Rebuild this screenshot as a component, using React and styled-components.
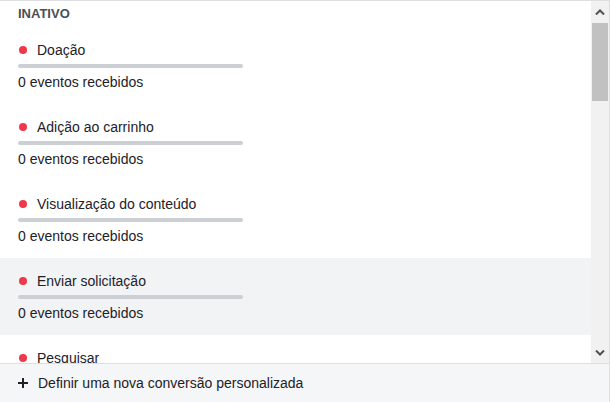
import React from "react";
import styled, { createGlobalStyle } from "styled-components";

const GlobalStyle = createGlobalStyle`
  body {
    margin: 0;
    background: #ffffff;
    font-family: "Liberation Sans", Arial, sans-serif;
  }
`;

const Panel = styled.div`
  width: 609px;
  height: 401px;
  border-top: 1px solid #dddfe2;
  border-right: 1px solid #dddfe2;
  display: flex;
  flex-direction: column;
  background: #fff;
`;

const Body = styled.div`
  display: flex;
  height: 362px;
  overflow: hidden;
`;

const List = styled.div`
  flex: 1;
  overflow: hidden;
`;

const Header = styled.div`
  height: 26px;
  padding-left: 18px;
  font-size: 13px;
  font-weight: bold;
  color: #4b4f56;
  line-height: 26px;
`;

const Item = styled.div`
  height: 77px;
  box-sizing: border-box;
  padding: 13px 18px 0;
  background: ${props => (props.active ? "#f2f3f5" : "transparent")};
`;

const Label = styled.div`
  display: flex;
  align-items: center;
  height: 20px;
  font-size: 14px;
  color: #1d2129;
`;

const Dot = styled.span`
  width: 8px;
  height: 8px;
  border-radius: 50%;
  background: #f0384b;
  margin: 0 10px 0 1px;
`;

const Bar = styled.div`
  width: 225px;
  height: 4px;
  border-radius: 2px;
  background: #ccd0d5;
  margin-top: 4px;
`;

const Count = styled.div`
  margin-top: 5px;
  height: 18px;
  line-height: 18px;
  font-size: 14px;
  color: #1d2129;
`;

const Scrollbar = styled.div`
  width: 18px;
  display: flex;
  flex-direction: column;
  background: #f1f1f1;
`;

const ArrowButton = styled.div`
  height: 21px;
  display: flex;
  align-items: center;
  justify-content: center;
`;

const Track = styled.div`
  flex: 1;
  padding: 1px 1px 0;
`;

const Thumb = styled.div`
  height: 78px;
  background: #c1c1c1;
`;

const Footer = styled.div`
  flex: 1;
  display: flex;
  align-items: center;
  gap: 10px;
  padding-left: 18px;
  border-top: 1px solid #dddfe2;
  background: #f5f6f7;
`;

const FooterText = styled.span`
  font-size: 14px;
  line-height: 18px;
  color: #1d2129;
`;

const events = [
  "Doação",
  "Adição ao carrinho",
  "Visualização do conteúdo",
  "Enviar solicitação",
  "Pesquisar"
];

const Chevron = ({ up }) => (
  <svg width="10" height="6" viewBox="0 0 10 6">
    <path
      d={up ? "M1 5.5 L5 1.5 L9 5.5" : "M1 0.5 L5 4.5 L9 0.5"}
      fill="none"
      stroke="#505050"
      strokeWidth="2"
    />
  </svg>
);

const Plus = () => (
  <svg width="10" height="10" viewBox="0 0 10 10">
    <path d="M5 0 V10 M0 5 H10" stroke="#1d2129" strokeWidth="2" />
  </svg>
);

const App = () => (
  <>
    <GlobalStyle />
    <Panel>
      <Body>
        <List>
          <Header>INATIVO</Header>
          {events.map((name, i) => (
            <Item key={name} active={i === 3}>
              <Label>
                <Dot />
                {name}
              </Label>
              <Bar />
              <Count>0 eventos recebidos</Count>
            </Item>
          ))}
        </List>
        <Scrollbar>
          <ArrowButton>
            <Chevron up />
          </ArrowButton>
          <Track>
            <Thumb />
          </Track>
          <ArrowButton>
            <Chevron />
          </ArrowButton>
        </Scrollbar>
      </Body>
      <Footer>
        <Plus />
        <FooterText>Definir uma nova conversão personalizada</FooterText>
      </Footer>
    </Panel>
  </>
);

export default App;
